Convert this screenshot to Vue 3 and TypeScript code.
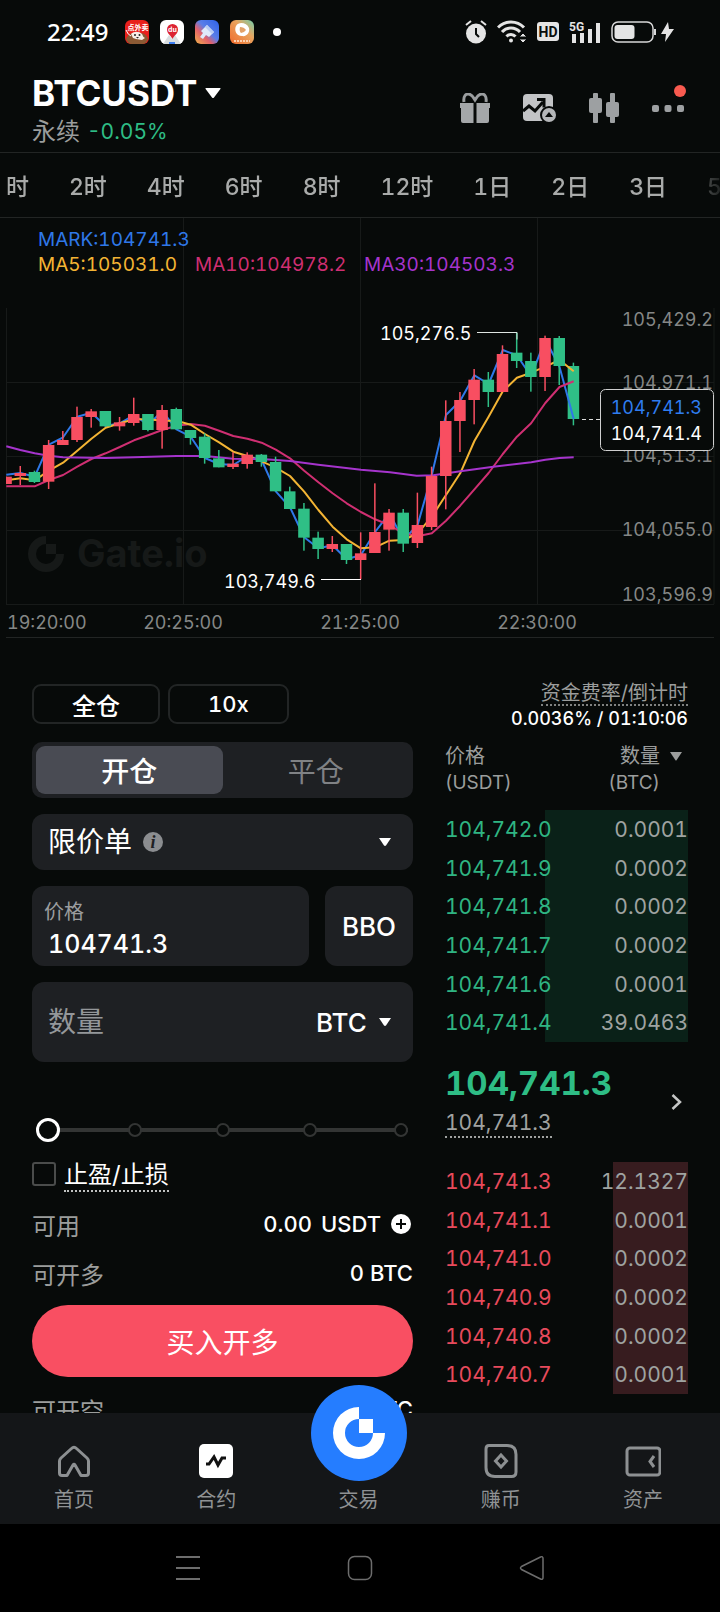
<script setup lang="ts">
import { computed, ref } from 'vue'

type Side = 'up' | 'down'
type Candle = [high: number, top: number, bottom: number, low: number, side: Side]
type Point = [x: number, y: number]

const periods = ['1时', '2时', '4时', '6时', '8时', '12时', '1日', '2日', '3日', '5日']

// Chart series are stored in thirds of a chart unit, measured from the plot top.
const UNIT = 3
const STEP = 42.55
const FIRST = 19

const candles: Candle[] = [
  [530, 530, 552, 552, 'up'],
  [498, 519, 528, 555, 'up'],
  [512, 516, 546, 549, 'down'],
  [420, 435, 545, 567, 'up'],
  [393, 420, 435, 435, 'up'],
  [320, 351, 420, 426, 'up'],
  [327, 334, 351, 383, 'up'],
  [333, 333, 379, 379, 'down'],
  [351, 367, 379, 392, 'up'],
  [293, 342, 369, 377, 'up'],
  [342, 342, 390, 394, 'down'],
  [315, 330, 390, 446, 'up'],
  [323, 327, 388, 388, 'down'],
  [390, 390, 414, 434, 'down'],
  [400, 410, 474, 491, 'down'],
  [450, 475, 502, 502, 'down'],
  [457, 491, 501, 507, 'up'],
  [457, 464, 492, 506, 'up'],
  [462, 464, 486, 500, 'down'],
  [470, 486, 574, 574, 'down'],
  [560, 574, 627, 627, 'down'],
  [609, 626, 713, 752, 'down'],
  [695, 713, 747, 777, 'down'],
  [708, 732, 747, 756, 'up'],
  [732, 732, 780, 792, 'down'],
  [697, 760, 780, 838, 'up'],
  [550, 696, 759, 759, 'up'],
  [627, 638, 689, 752, 'up'],
  [627, 638, 731, 756, 'down'],
  [578, 675, 729, 744, 'up'],
  [500, 528, 681, 690, 'up'],
  [301, 363, 528, 628, 'up'],
  [276, 300, 363, 456, 'up'],
  [207, 239, 300, 373, 'up'],
  [216, 239, 276, 321, 'down'],
  [136, 162, 276, 276, 'up'],
  [98, 158, 183, 204, 'down'],
  [158, 183, 231, 275, 'down'],
  [107, 114, 231, 273, 'up'],
  [108, 114, 198, 255, 'down'],
  [188, 198, 357, 376, 'down'],
]

const markValues = [
  524, 519, 530, 434, 412, 350, 338, 378, 370, 345, 375, 333, 388, 410, 474, 492, 495, 468, 480, 574,
  622, 712, 745, 736, 778, 765, 696, 640, 720, 675, 525, 345, 302, 226, 252, 150, 166, 229, 118, 200, 357,
]
const ma5Values = [
  541, 535, 541, 512, 488, 452, 416, 383, 370, 358, 358, 362, 362, 374, 402, 427, 455, 468, 484, 503,
  528, 575, 630, 680, 718, 745, 742, 722, 720, 700, 650, 585, 520, 423, 350, 274, 233, 218, 200, 180, 214,
]
const ma10Values = [
  559, 559, 559, 540, 525, 500, 477, 460, 441, 421, 406, 390, 377, 372, 377, 392, 408, 416, 428, 449,
  475, 512, 547, 580, 610, 636, 658, 675, 700, 709, 700, 662, 617, 568, 519, 462, 410, 370, 309, 261, 244,
]
const ma30Points: Point[] = [
  [19, 439], [61, 450], [104, 460], [146, 467], [189, 472], [317, 474], [402, 472], [530, 468], [615, 468],
  [700, 476], [785, 477], [870, 483], [955, 494], [1083, 509], [1170, 517], [1250, 527], [1300, 526],
  [1381, 514], [1480, 500], [1594, 487], [1636, 479], [1679, 474], [1721, 472],
]

const centre = (i: number) => FIRST + i * STEP
const toLine = (pts: Point[]) => pts.map(([x, y]) => `${(x / UNIT).toFixed(1)},${(y / UNIT).toFixed(1)}`).join(' ')
const series = (values: number[]) => toLine(values.map((v, i): Point => [centre(i), v]))

const bars = candles.map(([high, top, bottom, low, side], i) => ({
  x: centre(i) / UNIT,
  high: high / UNIT,
  low: low / UNIT,
  top: top / UNIT,
  height: (bottom - top) / UNIT,
  side,
}))
const lastBar = bars[bars.length - 1]
const pastBars = bars.slice(0, -1)

const priceAxis = [
  { y: 108, text: '105,429.2' },
  { y: 171, text: '104,971.1' },
  { y: 244, text: '104,513.1' },
  { y: 318, text: '104,055.0' },
  { y: 383, text: '103,596.9' },
]

const asks = [
  ['104,742.0', '0.0001'],
  ['104,741.9', '0.0002'],
  ['104,741.8', '0.0002'],
  ['104,741.7', '0.0002'],
  ['104,741.6', '0.0001'],
  ['104,741.4', '39.0463'],
]
const bids = [
  ['104,741.3', '12.1327'],
  ['104,741.1', '0.0001'],
  ['104,741.0', '0.0002'],
  ['104,740.9', '0.0002'],
  ['104,740.8', '0.0002'],
  ['104,740.7', '0.0001'],
]
const askDepth = ref(59)
const bidDepth = ref(31)
const askStyle = computed(() => ({ '--depth': `${askDepth.value}%` }))
const bidStyle = computed(() => ({ '--depth': `${bidDepth.value}%` }))

const mode = ref<'open' | 'close'>('open')
const price = ref('104741.3')
const amount = ref('')
const percent = ref(0)
const tpsl = ref(false)
</script>

<template>
  <div class="app">
    <div class="status">
      <span class="clock">22:49</span>
      <div class="notices">
        <svg class="app-icon" viewBox="0 0 24 24" aria-hidden="true">
          <rect width="24" height="24" rx="6" fill="#e8201c" />
          <path d="M1 19c2-4 4-6 8-6h6c5 0 7 3 8 6-1 3-3 5-6 5H7c-3 0-5-2-6-5z" fill="#8a5a34" />
          <path d="M6 14c3-3 8-3 11 0 1 2 1 3 3 4l-3 2-6-1-3-1z" fill="#f6efe6" />
          <path d="M1 10q2 5 5 6" stroke="#fff" fill="none" />
          <circle cx="10" cy="15" r="1" fill="#222" /><circle cx="14.500" cy="15" r="1" fill="#222" />
          <path d="M11 17h3l-1.500 1.500z" fill="#222" />
          <text x="13" y="9.500" text-anchor="middle" class="tiny" fill="#fff">点外卖</text>
        </svg>
        <svg class="app-icon" viewBox="0 0 24 24" aria-hidden="true">
          <rect width="24" height="24" rx="6" fill="#fff" />
          <path d="M3 24l6-9 3 4 3-4 6 9z" fill="#d9dee0" />
          <path d="M9 24v-2h6v2z" fill="#3b7df0" />
          <path d="M12.500 19c-1-3-5.500-5-5.500-9.500a5.500 5.500 0 0 1 11 0c0 4.500-4.500 6.500-5.500 9.500z" fill="#dc2332" />
          <text x="12.500" y="12" text-anchor="middle" class="tiny" fill="#fff">du</text>
        </svg>
        <svg class="app-icon" viewBox="0 0 24 24" aria-hidden="true">
          <defs>
            <linearGradient id="brush" x1="1" y1="0" x2="0" y2="1">
              <stop offset="0" stop-color="#2c62e8" /><stop offset=".45" stop-color="#5a7ee8" />
              <stop offset=".65" stop-color="#e2606a" /><stop offset="1" stop-color="#f0b348" />
            </linearGradient>
          </defs>
          <rect width="24" height="24" rx="6" fill="url(#brush)" />
          <path d="M12 5l7 7-5 5-3-2-3 4-3-2 3-4-2-2z" fill="#dfe9fa" />
          <path d="M12 5l7 7-2 2-7-7z" fill="#b9cdf3" />
        </svg>
        <svg class="app-icon" viewBox="0 0 24 24" aria-hidden="true">
          <defs>
            <linearGradient id="play" x1="1" y1="0" x2="0" y2="1">
              <stop offset="0" stop-color="#6fd0ae" /><stop offset=".4" stop-color="#e9a45e" /><stop offset="1" stop-color="#f06a2c" />
            </linearGradient>
          </defs>
          <rect width="24" height="24" rx="6" fill="url(#play)" />
          <path d="M6 6c3-5 11-3 13 2 1 4-2 9-7 8-6 0-8-6-6-10z" fill="#fff" />
          <path d="M10 7q4 0 6 3-2 3-5 3-2-2-1-6z" fill="#e2a268" />
          <path d="M4 21h16" stroke="#fbd0b0" stroke-width="2" stroke-dasharray="2 1" />
        </svg>
        <span class="more-dot"></span>
      </div>
      <div class="system">
        <svg width="22" height="24" viewBox="0 0 22 24" aria-hidden="true">
          <circle cx="11" cy="13.500" r="10" fill="#e4e4e4" />
          <path d="M1 5l5-4M21 5l-5-4" stroke="#e4e4e4" stroke-width="2" />
          <path d="M11 8v6l3 3" stroke="#0a0d0c" stroke-width="2" fill="none" />
        </svg>
        <svg class="wifi" width="30" height="24" viewBox="0 0 30 24" aria-hidden="true">
          <path d="M1 7.500a18 18 0 0 1 26 0M5 12a12 12 0 0 1 18 0M9.500 16.500a6 6 0 0 1 9 0" fill="none" stroke="#e4e4e4" stroke-width="3" />
          <circle cx="14" cy="20.500" r="2" fill="#e4e4e4" />
          <path d="M22 17l4-4 4 4zM22 19h8l-4 4z" fill="#e4e4e4" stroke="#070a09" stroke-width="1" />
        </svg>
        <svg class="hd" width="22" height="20" viewBox="0 0 22 20" aria-hidden="true">
          <rect width="22" height="19" rx="3" fill="#e4e4e4" />
          <text x="11" y="15" text-anchor="middle" class="hd-text" fill="#0a0d0c">HD</text>
        </svg>
        <svg class="signal" width="32" height="24" viewBox="0 0 32 24" aria-hidden="true">
          <path d="M5 14v9M13 13v10M21 9v14M29 3v20" stroke="#e4e4e4" stroke-width="4" />
          <text x="0" y="11" class="g-text" fill="#e4e4e4">5G</text>
        </svg>
        <svg width="45" height="22" viewBox="0 0 45 22" aria-hidden="true">
          <rect x="1" y="1" width="41" height="20" rx="6" fill="none" stroke="#d8d8d8" stroke-width="1.500" />
          <rect x="3.500" y="4" width="20" height="14" rx="3" fill="#e4e4e4" />
          <path d="M44 8v6" stroke="#d8d8d8" stroke-width="2" />
        </svg>
        <svg class="bolt" width="13" height="20" viewBox="0 0 13 20" aria-hidden="true">
          <path d="M7 0L0 12h5l-1 8 9-13H8z" fill="#e4e4e4" />
        </svg>
      </div>
    </div>

    <header class="header">
      <div class="pair">
        <button class="symbol" type="button">
          <span>BTCUSDT</span>
          <svg width="16" height="10" viewBox="0 0 16 10" aria-hidden="true"><path d="M1 0h14q1 0 .4 1L9 9.400q-1 1-2 0L.6 1Q0 0 1 0z" fill="#fff" /></svg>
        </button>
        <div class="change"><span class="muted">永续</span><span class="green">-0.05%</span></div>
      </div>
      <div class="tools">
        <button type="button" aria-label="gift">
          <svg width="30" height="30" viewBox="0 0 30 30">
            <path d="M4 9C3 3 6 1 8 1c4 0 5 3 7 6 2-3 3-6 7-6 2 0 5 2 4 8" fill="none" stroke="#9a9d9f" stroke-width="3" />
            <path d="M0 10h13.500v20H3q-2 0-2-2V15H0zM16.500 10H30v5h-1v13q0 2-2 2H16.500z" fill="#a4a7a9" />
          </svg>
        </button>
        <button type="button" aria-label="chart analysis">
          <svg width="33" height="28" viewBox="0 0 33 28">
            <rect x="0" y="0" width="30" height="27" rx="4" fill="#c2c4c6" />
            <path d="M0 17l6-5 6 5L20 8" fill="none" stroke="#070a09" stroke-width="3" />
            <path d="M14 5.500h7v8" fill="none" stroke="#070a09" stroke-width="3" />
            <circle cx="26" cy="21" r="9" fill="#070a09" /><circle cx="26" cy="21" r="7" fill="#b5b7b9" />
            <path d="M22 23l4-5 4 5z" fill="#070a09" />
          </svg>
        </button>
        <button type="button" aria-label="candlesticks">
          <svg width="30" height="30" viewBox="0 0 30 30" fill="#9da0a2">
            <rect x="4" y="0" width="5" height="30" rx="1" /><rect x="0" y="5" width="13" height="15" rx="2" />
            <rect x="21" y="0" width="5" height="30" rx="1" /><rect x="17" y="9" width="13" height="15" rx="2" />
          </svg>
        </button>
        <button type="button" class="more" aria-label="more">
          <svg width="32" height="7" viewBox="0 0 32 7" fill="#9da0a2">
            <rect width="7" height="7" rx="2" /><rect x="12.500" width="7" height="7" rx="2" /><rect x="25" width="7" height="7" rx="2" />
          </svg>
          <span class="alert"></span>
        </button>
      </div>
    </header>

    <nav class="periods">
      <button v-for="p in periods" :key="p" type="button">{{ p }}</button>
    </nav>

    <main class="content">
      <svg class="chart" viewBox="0 0 720 420" role="img" aria-label="BTCUSDT">
        <g stroke="#171a19" fill="none">
          <path d="M183.500 0v386M360.500 0v386M537.500 0v386M6.500 90v296M714 90v296" />
          <path d="M6 164.500h708M6 238.500h708M6 312.500h708M6 386.500h708" />
          <path d="M6 419.500h708" stroke="#222524" />
        </g>
        <g fill="#161918">
          <path d="M46 318a18 18 0 1 0 18 18h-8a10 10 0 1 1-10-10zM46 326h10v10H46z" />
          <text x="77" y="349" class="watermark">Gate.io</text>
        </g>
        <g class="axis">
          <text v-for="a in priceAxis" :key="a.text" x="713" :y="a.y" text-anchor="end">{{ a.text }}</text>
          <text x="7" y="411">19:20:00</text>
          <text x="183" y="411" text-anchor="middle">20:25:00</text>
          <text x="360" y="411" text-anchor="middle">21:25:00</text>
          <text x="537" y="411" text-anchor="middle">22:30:00</text>
        </g>
        <svg x="6" y="82" width="708" height="304" viewBox="6 0 708 304">
          <g :class="lastBar.side">
            <rect :x="lastBar.x - 1" :y="lastBar.high" width="1.500" :height="lastBar.low - lastBar.high" />
            <rect :x="lastBar.x - 6" :y="lastBar.top" width="11.500" :height="lastBar.height" />
          </g>
          <polyline class="line mark" :points="series(markValues)" />
          <polyline class="line ma10" :points="series(ma10Values)" />
          <polyline class="line ma5" :points="series(ma5Values)" />
          <polyline class="line ma30" :points="toLine(ma30Points)" />
          <g v-for="(b, i) in pastBars" :key="i" :class="b.side">
            <rect :x="b.x - 1" :y="b.high" width="1.500" :height="b.low - b.high" />
            <rect :x="b.x - 6" :y="b.top" width="11.500" :height="b.height" />
          </g>
        </svg>
        <g class="legend">
          <text x="38" y="28" fill="#2f78e8">MARK:104741.3</text>
          <text x="38" y="53" fill="#f3b434">MA5:105031.0</text>
          <text x="195" y="53" fill="#cf2f72">MA10:104978.2</text>
          <text x="364" y="53" fill="#a534cc">MA30:104503.3</text>
        </g>
        <g class="callout">
          <text x="380" y="122">105,276.5</text>
          <path d="M477 114.500h40v7" fill="none" stroke="#dfe5e2" />
          <text x="224" y="370">103,749.6</text>
          <path d="M321 361.500h40" stroke="#fff" />
        </g>
        <path d="M582 201.500h18" stroke="#ddd" stroke-dasharray="4 3" />
        <rect x="600.500" y="171.500" width="113" height="61" rx="5" fill="#070a09" stroke="#cfcfcf" />
        <g class="callout" text-anchor="end">
          <text x="702" y="196" class="mark-price">104,741.3</text>
          <text x="702" y="222">104,741.4</text>
        </g>
      </svg>

      <section class="trade">
        <form class="form" @submit.prevent>
          <div class="margin-row">
            <button type="button" class="outline cross">全仓</button>
            <button type="button" class="outline lever">10x</button>
          </div>
          <div class="segment">
            <button type="button" :class="{ active: mode === 'open' }" @click="mode = 'open'">开仓</button>
            <button type="button" :class="{ active: mode === 'close' }" @click="mode = 'close'">平仓</button>
          </div>
          <div class="field order-type">
            <select aria-label="order type"><option>限价单</option></select>
            <button type="button" class="info" aria-label="info">i</button>
            <svg class="caret" width="12" height="8" viewBox="0 0 12 8" aria-hidden="true"><path d="M0 0h12L7 7.500q-1 .8-2 0z" fill="#fff" /></svg>
          </div>
          <div class="price-row">
            <div class="field price">
              <label for="price">价格</label>
              <input id="price" v-model="price" type="text" inputmode="decimal" />
            </div>
            <button type="button" class="bbo">BBO</button>
          </div>
          <div class="field amount">
            <input v-model="amount" type="text" placeholder="数量" aria-label="数量" />
            <select aria-label="unit"><option>BTC</option></select>
            <svg class="caret" width="12" height="8" viewBox="0 0 12 8" aria-hidden="true"><path d="M0 0h12L7 7.500q-1 .8-2 0z" fill="#fff" /></svg>
          </div>
          <div class="slider">
            <div class="ticks"><span v-for="n in 5" :key="n"></span></div>
            <input v-model.number="percent" type="range" min="0" max="100" aria-label="percent" />
          </div>
          <label class="tpsl"><input v-model="tpsl" type="checkbox" /><span>止盈/止损</span></label>
          <div class="info-row available">
            <span class="muted">可用</span>
            <span class="value"><span>0.00</span><span>USDT</span></span>
            <button type="button" class="plus" aria-label="add">
              <svg width="20" height="20" viewBox="0 0 20 20"><circle cx="10" cy="10" r="10" fill="#fff" /><path d="M10 5v10M5 10h10" stroke="#070a09" stroke-width="2" /></svg>
            </button>
          </div>
          <div class="info-row"><span class="muted">可开多</span><span class="value">0 BTC</span></div>
          <button type="submit" class="buy">买入开多</button>
          <div class="info-row"><span class="muted">可开空</span><span class="value">0 BTC</span></div>
        </form>

        <div class="book">
          <div class="funding">
            <a href="#">资金费率/倒计时</a>
            <span>0.0036% / 01:10:06</span>
          </div>
          <table>
            <thead>
              <tr>
                <th scope="col">价格<br /><span class="coin">(USDT)</span></th>
                <th scope="col">
                  <button type="button" class="unit">
                    <span>数量<br /><span class="coin">(BTC)</span></span>
                    <svg width="12" height="9" viewBox="0 0 12 9" aria-hidden="true"><path d="M0 0h12L6.700 8q-.7 1-1.400 0z" fill="#9b9d9c" /></svg>
                  </button>
                </th>
              </tr>
            </thead>
            <tbody class="asks" :style="askStyle">
              <tr v-for="r in asks" :key="r[0]"><td>{{ r[0] }}</td><td>{{ r[1] }}</td></tr>
            </tbody>
          </table>
          <div class="last">
            <div>
              <strong>104,741.3</strong>
              <a href="#">104,741.3</a>
            </div>
            <button type="button" aria-label="details">
              <svg width="11" height="16" viewBox="0 0 11 16"><path d="M1.500 1L9 8l-7.500 7" fill="none" stroke="#c4c6c5" stroke-width="2.500" /></svg>
            </button>
          </div>
          <table>
            <tbody class="bids" :style="bidStyle">
              <tr v-for="r in bids" :key="r[0]"><td>{{ r[0] }}</td><td>{{ r[1] }}</td></tr>
            </tbody>
          </table>
        </div>
      </section>
    </main>

    <nav class="tabbar">
      <a href="#">
        <svg width="36" height="36" viewBox="0 0 36 36" fill="none" stroke="#8d9092" stroke-width="3" stroke-linejoin="round">
          <path d="M15.500 5.500Q18 3 20.500 5.500L31 15q1.500 1.500 1.500 3v12q0 2.500-2.500 2.500h-5L19 22q-1-1.500-2 0l-6 10.500H6Q3.500 32.500 3.500 30V18q0-1.500 1.500-3z" />
        </svg>
        <span>首页</span>
      </a>
      <a href="#">
        <svg width="36" height="36" viewBox="0 0 36 36">
          <rect x="1" y="1" width="34" height="34" rx="5" fill="#fff" />
          <path d="M8 21h3l5-7 4 8 4-7h4" fill="none" stroke="#111" stroke-width="3" />
        </svg>
        <span>合约</span>
      </a>
      <a href="#" class="centre">
        <svg class="logo" width="96" height="96" viewBox="0 0 96 96">
          <circle cx="48" cy="48" r="48" fill="#257dff" />
          <path d="M48 22a26 26 0 1 0 26 26H62a14 14 0 1 1-14-14zM48 34h14v14H48z" fill="#fff" />
        </svg>
        <span>交易</span>
      </a>
      <a href="#">
        <svg width="36" height="36" viewBox="0 0 36 36" fill="none" stroke="#8d9092" stroke-width="3">
          <path d="M6 2.500h18q9 0 9 9V29q0 4.500-4.500 4.500H12q-9 0-9-9V6q0-3.500 3-3.500z" />
          <path d="M18 12l5.500 6-5.500 6-5.500-6z" />
        </svg>
        <span>赚币</span>
      </a>
      <a href="#">
        <svg width="36" height="36" viewBox="0 0 36 36" fill="none" stroke="#8d9092" stroke-width="3">
          <rect x="2" y="5" width="33" height="27" rx="3" />
          <path d="M29 13l-4 5.500 4 5.500" />
        </svg>
        <span>资产</span>
      </a>
    </nav>

    <div class="keys">
      <button type="button" aria-label="recent"><svg width="26" height="26" viewBox="0 0 26 26"><path d="M1 2h24M1 13h24M1 24h24" stroke="#6d6d6d" stroke-width="2" /></svg></button>
      <button type="button" aria-label="home"><svg width="26" height="26" viewBox="0 0 26 26"><rect x="1.500" y="1.500" width="23" height="23" rx="6" fill="none" stroke="#6d6d6d" stroke-width="1.500" /></svg></button>
      <button type="button" aria-label="back"><svg width="26" height="26" viewBox="0 0 26 26"><path d="M21.500 2Q24 .8 24 3.500v19q0 2.700-2.500 1.500L2.500 14.500Q.5 13 2.500 11.500z" fill="none" stroke="#6d6d6d" stroke-width="1.500" /></svg></button>
    </div>
  </div>
</template>

<style>
html,
body {
  background: #070a09;
}
</style>

<style scoped>
* {
  box-sizing: border-box;
}
.app {
  display: flex;
  flex-direction: column;
  height: 100vh;
  background: #070a09;
  color: #fff;
  font-family: Inter, "Noto Sans CJK SC", sans-serif;
  font-feature-settings: "tnum";
  overflow: hidden;
}
button,
select,
input {
  padding: 0;
  border: 0;
  border-radius: 0;
  background: none;
  color: inherit;
  font: inherit;
  font-feature-settings: inherit;
  appearance: none;
  outline: none;
}
button svg {
  display: block;
}
a {
  color: inherit;
  text-decoration: none;
}
.muted {
  color: #9b9d9c;
}
.green {
  color: #2ebd85;
}

.status {
  display: flex;
  flex: none;
  align-items: center;
  height: 64px;
  padding: 0 46px 0 47px;
}
.clock {
  width: 78px;
  font: 500 24px/32px "Noto Sans", sans-serif;
}
.notices {
  display: flex;
  align-items: center;
  gap: 11px;
}
.app-icon {
  width: 24px;
  height: 24px;
}
.tiny {
  font: 700 7px "Noto Sans CJK SC", sans-serif;
}
.more-dot {
  width: 8px;
  height: 8px;
  margin-left: 8px;
  border-radius: 50%;
  background: #fff;
}
.system {
  display: flex;
  align-items: center;
  gap: 10px;
  margin-left: auto;
}
.bolt {
  margin-left: -5px;
}
.hd-text {
  font: 700 14px Roboto, sans-serif;
}
.g-text {
  font: 700 12px Roboto, sans-serif;
  paint-order: stroke;
  stroke: #070a09;
  stroke-width: 2px;
}

.header {
  display: flex;
  flex: none;
  align-items: center;
  justify-content: space-between;
  height: 89px;
  padding: 0 36px 0 32px;
  border-bottom: 1px solid #222524;
}
.pair {
  padding-top: 4px;
}
.symbol {
  display: flex;
  align-items: center;
  gap: 8px;
  height: 44px;
  font-size: 35px;
  font-weight: 700;
  line-height: 44px;
}
.change {
  display: flex;
  gap: 7px;
  align-items: center;
  height: 34px;
  font-size: 21px;
  line-height: 34px;
}
.change .muted {
  font-size: 24px;
}
.tools {
  display: flex;
  align-items: center;
  gap: 33px;
}
.more {
  position: relative;
}
.alert {
  position: absolute;
  top: -20px;
  right: -2px;
  width: 12px;
  height: 12px;
  border-radius: 50%;
  background: #f85a4f;
}

.periods {
  display: flex;
  flex: none;
  gap: 40px;
  height: 64px;
  padding-top: 2px;
  overflow: hidden;
  color: #a9abaa;
  mask-image: linear-gradient(90deg, transparent 5px, #000 8px, #000 calc(100% - 50px), transparent calc(100% + 10px));
}
.periods button {
  flex: none;
  font-size: 23px;
  font-weight: 500;
  line-height: 64px;
}
.periods button:first-child {
  margin-left: -9px;
}

.content {
  flex: 1;
  min-height: 0;
  overflow: hidden auto;
  scrollbar-width: none;
  border-top: 1px solid #222524;
}
.chart {
  display: block;
  width: 100%;
  font-size: 18px;
}
.legend {
  font-size: 19px;
}
.axis {
  fill: #858786;
}
.callout {
  fill: #fff;
}
.mark-price {
  fill: #2f7df0;
}
.watermark {
  font-size: 38px;
  font-weight: 700;
}
.up {
  fill: #f84e61;
}
.down {
  fill: #2fbf86;
}
.line {
  fill: none;
  stroke-width: 2;
  stroke-linejoin: round;
}
.mark {
  stroke: #2f78e8;
}
.ma5 {
  stroke: #f3b434;
}
.ma10 {
  stroke: #cf2f72;
}
.ma30 {
  stroke: #a534cc;
}

.trade {
  display: grid;
  grid-template-columns: 381fr 243fr;
  gap: 32px;
  padding: 44px 32px 0;
}
.form {
  display: flex;
  flex-direction: column;
  min-width: 0;
  padding-top: 2px;
}
.margin-row {
  display: flex;
  gap: 8px;
  margin-bottom: 18px;
}
.outline {
  height: 40px;
  border: 2px solid #222525;
  border-radius: 9px;
  font-size: 22px;
  font-weight: 500;
}
.cross {
  width: 128px;
  font-size: 24px;
}
.lever {
  width: 121px;
}
.segment {
  display: flex;
  height: 56px;
  margin-bottom: 16px;
  padding: 4px;
  border-radius: 10px;
  background: #1e2023;
}
.segment button {
  flex: 1;
  border-radius: 9px;
  color: #808285;
  font-size: 28px;
}
.segment .active {
  background: #494b53;
  color: #fff;
  font-weight: 500;
}
.field,
.bbo {
  border-radius: 12px;
  background: #1e2023;
}
.order-type {
  display: flex;
  align-items: center;
  height: 56px;
  margin-bottom: 16px;
  padding: 0 22px 0 16px;
  font-size: 28px;
}
.info {
  width: 20px;
  height: 20px;
  margin-left: 10px;
  border-radius: 50%;
  background: #8b8d90;
  color: #1e2023;
  font: italic 700 18px/20px "Liberation Serif", serif;
}
.caret {
  margin-left: auto;
}
.price-row {
  display: flex;
  gap: 16px;
  margin-bottom: 16px;
}
.price {
  display: flex;
  flex: 1;
  flex-direction: column;
  min-width: 0;
  height: 80px;
  padding: 12px 12px 0;
}
.price label {
  color: #9b9d9f;
  font-size: 20px;
  line-height: 28px;
}
.price input {
  width: 100%;
  padding-left: 4px;
  font-size: 25px;
  font-weight: 500;
  line-height: 36px;
}
.bbo {
  width: 88px;
  font-size: 26px;
  font-weight: 500;
}
.amount {
  display: flex;
  align-items: center;
  height: 80px;
  padding: 0 22px 0 16px;
  font-size: 26px;
  font-weight: 500;
}
.amount input {
  flex: 1;
  min-width: 0;
  font-size: 28px;
  font-weight: 400;
}
.amount input::placeholder {
  color: #94979a;
  opacity: 1;
}
.amount .caret {
  margin-left: 12px;
}
.slider {
  position: relative;
  height: 24px;
  margin: 56px 5px 0 4px;
}
.ticks {
  position: absolute;
  inset: 0 0 0 5px;
  display: flex;
  align-items: center;
  justify-content: space-between;
  background: linear-gradient(#333534, #333534) center / 100% 4px no-repeat;
}
.ticks span {
  width: 14px;
  height: 14px;
  border: 2px solid #333534;
  border-radius: 50%;
  background: #070a09;
}
.ticks span:last-child {
  margin-left: 4px;
}
.slider input {
  position: absolute;
  inset: 0;
  width: 100%;
  height: 24px;
  margin: 0;
}
.slider input::-webkit-slider-thumb {
  width: 24px;
  height: 24px;
  border: 3px solid #fff;
  border-radius: 50%;
  background: #070a09;
  appearance: none;
}
.tpsl {
  display: flex;
  align-items: center;
  gap: 8px;
  height: 32px;
  margin-top: 18px;
  font-size: 24px;
}
.tpsl input {
  width: 24px;
  height: 24px;
  margin: 0 0 4px;
  border: 2px solid #4a4c4b;
  border-radius: 3px;
}
.tpsl span {
  border-bottom: 2px dotted #bfc1c0;
  line-height: 30px;
}
.info-row {
  display: flex;
  align-items: center;
  height: 28px;
  margin-top: 21px;
  font-size: 24px;
}
.available {
  margin-top: 18px;
}
.value {
  display: flex;
  gap: 9px;
  margin-left: auto;
  font-size: 22px;
  font-weight: 500;
}
.plus {
  margin: 0 2px 0 10px;
}
.buy {
  height: 72px;
  margin-top: 18px;
  border-radius: 36px;
  background: #f94f62;
  font-size: 28px;
}
.buy + .info-row {
  margin-top: 18px;
}

.book {
  min-width: 0;
}
.funding {
  display: flex;
  flex-direction: column;
  align-items: flex-end;
  margin-bottom: 11px;
  font-size: 18px;
  font-weight: 500;
  line-height: 26px;
}
.funding a {
  border-bottom: 2px dotted #7f8180;
  color: #9b9d9c;
  font-size: 20px;
  font-weight: 400;
  line-height: 22px;
}
table {
  width: 100%;
  border-collapse: collapse;
}
th {
  padding: 0 0 14px;
  color: #9b9d9c;
  font-size: 20px;
  font-weight: 400;
  line-height: 26px;
  text-align: left;
}
.coin {
  font-size: 19px;
}
.unit {
  display: flex;
  gap: 10px;
  margin-left: auto;
  padding-right: 6px;
  text-align: right;
}
.unit svg {
  margin-top: 9px;
}
tbody tr {
  height: 39px;
}
tbody tr:nth-child(3n) {
  height: 38px;
}
td {
  padding: 0;
  font-size: 21px;
  line-height: 28px;
}
td:last-child {
  color: #9fa3a1;
  text-align: right;
}
.asks {
  background: linear-gradient(#0a2118, #0a2118) right / var(--depth) 100% no-repeat;
  color: #2fb583;
}
.bids {
  background: linear-gradient(#371c1f, #371c1f) right / var(--depth) 100% no-repeat;
  color: #e84a5c;
}
.last {
  display: flex;
  align-items: center;
  justify-content: space-between;
  height: 120px;
  padding-right: 6px;
}
.last div {
  padding-bottom: 4px;
}
.last strong {
  display: block;
  margin-bottom: 7px;
  color: #2ebd85;
  font-size: 33px;
  line-height: 40px;
}
.last a {
  display: inline-block;
  border-bottom: 2px dotted #a0a2a1;
  color: #a0a2a1;
  font-size: 21px;
  line-height: 26px;
}

.tabbar {
  position: relative;
  display: flex;
  flex: none;
  height: 111px;
  padding: 0 6px 0 3px;
  background: #141618;
}
.tabbar a {
  display: flex;
  flex: 1;
  flex-direction: column;
  align-items: center;
  justify-content: flex-end;
  gap: 6px;
  padding-bottom: 9px;
  color: #8f9294;
  font-size: 20px;
  line-height: 30px;
}
.tabbar .centre {
  gap: 4px;
}
.logo {
  flex: none;
}
.keys {
  display: flex;
  flex: none;
  align-items: center;
  justify-content: space-around;
  height: 88px;
  padding: 0 102px;
  background: #000;
}
</style>
